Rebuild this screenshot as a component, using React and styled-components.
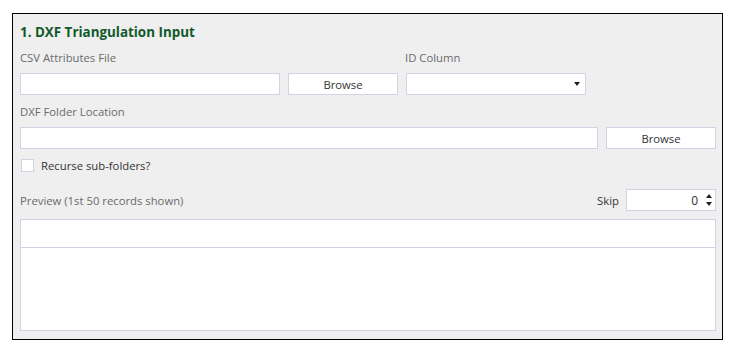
import React from "react";
import styled, { createGlobalStyle } from "styled-components";

const Global = createGlobalStyle`
  html, body { margin: 0; padding: 0; background: #ffffff; }
  body { font-family: "Open Sans", "Noto Sans", sans-serif; }
  * { box-sizing: border-box; }
`;

const FIELD_BORDER = "#d2d2e2";
const FS = "11.3px";

const Page = styled.div`
  padding: 13px 0 0 12px;
`;

const Panel = styled.section`
  width: 711px;
  height: 327px;
  border: 1px solid #000;
  background: #efefef;
  padding: 8px 6px 8px 7px;
  display: flex;
  flex-direction: column;
`;

const Title = styled.h2`
  margin: 0;
  height: 20px;
  line-height: 20px;
  font-size: 13.4px;
  font-weight: 700;
  color: #12592b;
`;

const LabelRow = styled.div`
  display: flex;
  height: ${(p) => p.$h}px;
  line-height: ${(p) => p.$lh || p.$h}px;
  font-size: ${FS};
  color: #6b6b6b;
`;

const Label = styled.span`
  width: ${(p) => (p.$w ? `${p.$w}px` : "auto")};
  flex: none;
`;

const FieldRow = styled.div`
  display: flex;
  height: 22px;
  gap: 8px;
`;

const TextBox = styled.div`
  width: ${(p) => (p.$w ? `${p.$w}px` : "auto")};
  flex: ${(p) => (p.$w ? "none" : "1")};
  height: 22px;
  background: #fff;
  border: 1px solid ${FIELD_BORDER};
`;

const Button = styled.button`
  width: 110px;
  height: 22px;
  flex: none;
  background: #fff;
  border: 1px solid ${FIELD_BORDER};
  font-family: inherit;
  font-size: ${FS};
  color: #333;
  padding: 0;
`;

const Combo = styled.div`
  width: 180px;
  height: 22px;
  flex: none;
  background: #fff;
  border: 1px solid ${FIELD_BORDER};
  display: flex;
  align-items: center;
  justify-content: flex-end;
  padding-right: 5px;
`;

const Arrow = styled.span`
  width: 0;
  height: 0;
  border-left: 3.5px solid transparent;
  border-right: 3.5px solid transparent;
  border-top: 4px solid #222;
`;

const CheckRow = styled.label`
  display: flex;
  align-items: center;
  height: 32px;
  font-size: ${FS};
  color: #333;
  gap: 7px;
  padding-left: 1px;
`;

const CheckBox = styled.span`
  width: 13px;
  height: 13px;
  background: #fff;
  border: 1px solid ${FIELD_BORDER};
`;

const PreviewRow = styled.div`
  display: flex;
  align-items: center;
  height: 38px;
  font-size: ${FS};
`;

const Muted = styled.span`
  color: #6b6b6b;
  flex: 1;
`;

const SkipLabel = styled.span`
  color: #333;
  margin-right: 7px;
`;

const Spinner = styled.div`
  width: 90px;
  height: 22px;
  background: #fff;
  border: 1px solid ${FIELD_BORDER};
  display: flex;
  align-items: center;
  justify-content: flex-end;
  padding-right: 3px;
  color: #333;
  font-size: 12px;
`;

const SpinArrows = styled.span`
  display: flex;
  flex-direction: column;
  gap: 4px;
  margin-left: 8px;
`;

const Tri = styled.span`
  width: 0;
  height: 0;
  border-left: 3px solid transparent;
  border-right: 3px solid transparent;
  ${(p) =>
    p.$up ? "border-bottom: 4px solid #222;" : "border-top: 4px solid #222;"}
`;

const Grid = styled.div`
  height: 112px;
  background: #fff;
  border: 1px solid ${FIELD_BORDER};
  display: flex;
  flex-direction: column;
`;

const GridHeader = styled.div`
  height: 28px;
  border-bottom: 1px solid ${FIELD_BORDER};
`;

export default function App() {
  return (
    <Page>
      <Global />
      <Panel>
        <Title>1. DXF Triangulation Input</Title>
        <LabelRow $h={31}>
          <Label $w={385}>CSV Attributes File</Label>
          <Label>ID Column</Label>
        </LabelRow>
        <FieldRow>
          <TextBox $w={260} />
          <Button>Browse</Button>
          <Combo>
            <Arrow />
          </Combo>
        </FieldRow>
        <LabelRow $h={32} $lh={34}>
          <Label>DXF Folder Location</Label>
        </LabelRow>
        <FieldRow>
          <TextBox />
          <Button>Browse</Button>
        </FieldRow>
        <CheckRow>
          <CheckBox />
          Recurse sub-folders?
        </CheckRow>
        <PreviewRow>
          <Muted>Preview (1st 50 records shown)</Muted>
          <SkipLabel>Skip</SkipLabel>
          <Spinner>
            0
            <SpinArrows>
              <Tri $up />
              <Tri />
            </SpinArrows>
          </Spinner>
        </PreviewRow>
        <Grid>
          <GridHeader />
        </Grid>
      </Panel>
    </Page>
  );
}
